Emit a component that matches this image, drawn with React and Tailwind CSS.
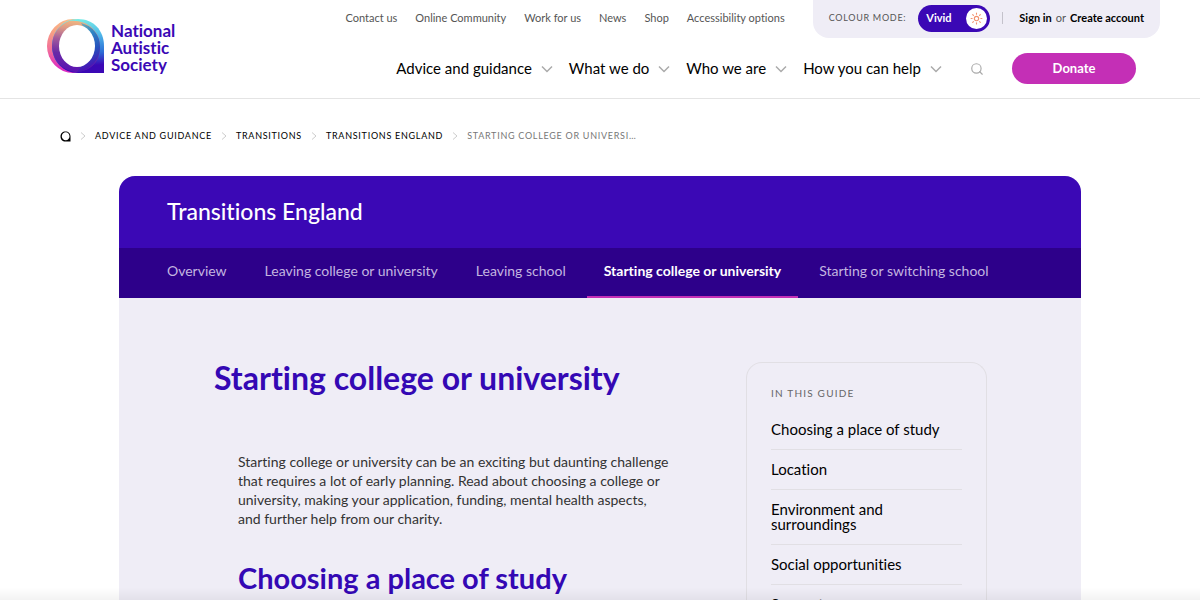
import React from "react";
import { Search, Sun } from "lucide-react";

const topLinks = ["Contact us", "Online Community", "Work for us", "News", "Shop", "Accessibility options"];

const mainNav = ["Advice and guidance", "What we do", "Who we are", "How you can help"];

const crumbs = ["Advice and guidance", "Transitions", "Transitions England"];

const tabs = [
  { label: "Overview" },
  { label: "Leaving college or university" },
  { label: "Leaving school" },
  { label: "Starting college or university", active: true },
  { label: "Starting or switching school" },
];

const guide = [
  "Choosing a place of study",
  "Location",
  "Environment and surroundings",
  "Social opportunities",
  "Support",
];

function Logo() {
  return (
    <a href="#" className="flex items-end gap-[7px] text-[#3b08b5]">
      <svg viewBox="0 0 57 54" className="h-[54px] w-[57px]" aria-hidden="true">
        <defs>
          <linearGradient id="outer" x1="0.6" y1="0" x2="0.3" y2="1">
            <stop offset="0" stopColor="#fbc08c" />
            <stop offset="0.35" stopColor="#f8a283" />
            <stop offset="0.7" stopColor="#f26a9b" />
            <stop offset="1" stopColor="#d81fc8" />
          </linearGradient>
          <linearGradient id="drop" x1="0.5" y1="0" x2="0.6" y2="1">
            <stop offset="0" stopColor="#78ece6" />
            <stop offset="0.3" stopColor="#52bdea" />
            <stop offset="0.65" stopColor="#2d6ed6" />
            <stop offset="0.88" stopColor="#3b08b5" />
          </linearGradient>
          <linearGradient id="overlap" x1="0.5" y1="0" x2="0.4" y2="1">
            <stop offset="0" stopColor="#f0b682" />
            <stop offset="0.16" stopColor="#dd9a86" />
            <stop offset="0.38" stopColor="#a35a9c" />
            <stop offset="0.65" stopColor="#6a2aa6" />
            <stop offset="1" stopColor="#5a12b4" />
          </linearGradient>
          <linearGradient id="overlapRight" x1="0" y1="0" x2="0.2" y2="1">
            <stop offset="0" stopColor="#7fb0b0" />
            <stop offset="0.3" stopColor="#2f86c4" />
            <stop offset="0.65" stopColor="#2650bd" />
            <stop offset="1" stopColor="#4a10b4" />
          </linearGradient>
        </defs>
        <ellipse cx="26" cy="27" rx="26" ry="27" fill="url(#outer)" />
        <path d="M31 0C46 0 57 11 57 27V54H31C16 54 5 42 5 27S16 0 31 0Z" fill="url(#drop)" />
        <path d="M22 2C40 0 53 12 53 28S42 53 28 53C14 51 5 40 5 27C5 15 12 6 22 2Z" fill="url(#overlap)" />
        <path d="M34 4C46 7 53 16 53 28C53 41 43 52 30 53L36 45L48 27Z" fill="url(#overlapRight)" />
        <ellipse cx="30" cy="27" rx="18" ry="21" fill="#fff" />
      </svg>
      <span className="text-[17px] leading-[17px] font-bold">
        National
        <br />
        Autistic
        <br />
        Society
      </span>
    </a>
  );
}

function DownArrow() {
  return (
    <svg viewBox="0 0 12 8" className="h-2 w-3 fill-none stroke-[#aaa]" strokeWidth="1.5" aria-hidden="true">
      <path d="M1 1.500L6 6.500L11 1.500" />
    </svg>
  );
}

function CrumbArrow() {
  return (
    <svg viewBox="0 0 8 8" className="size-2 fill-none stroke-[#ccc]" aria-hidden="true">
      <path d="M2 0.500L6 4L2 7.500" />
    </svg>
  );
}

function Header() {
  return (
    <header className="flex justify-between border-b border-[#e4e4e4] pr-10 pb-[14px] pl-[47px]">
      <div className="pt-[19px]">
        <Logo />
      </div>
      <div className="flex flex-col items-end">
        <div className="flex items-start gap-7">
          <nav className="flex h-9 items-center gap-[18px] text-[11px] text-[#555]">
            {topLinks.map((link) => (
              <a key={link} href="#">
                {link}
              </a>
            ))}
          </nav>
          <div className="flex h-[38px] items-center rounded-b-2xl bg-[#efedf6] px-4 pb-[2px] text-[11px]">
            <span className="text-[9px] tracking-[0.08em] text-[#555] uppercase">Colour mode:</span>
            <button className="mx-3 flex h-[27px] w-[72px] items-center justify-between rounded-full bg-[#3b08b5] pr-[3px] pl-2 font-bold text-white">
              Vivid
              <span className="flex size-[21px] items-center justify-center rounded-full bg-white">
                <Sun className="size-[13px] text-[#f2916f]" strokeWidth={2} />
              </span>
            </button>
            <span className="mr-4 h-3 w-px bg-[#c4c2cb]" />
            <a href="#" className="font-bold">
              Sign in
            </a>
            <span className="mx-1 text-[#555]">or</span>
            <a href="#" className="font-bold">
              Create account
            </a>
          </div>
        </div>
        <div className="mt-[15px] flex items-center pr-6">
          <nav className="flex items-center gap-4 text-[15px]">
            {mainNav.map((item) => (
              <a key={item} href="#" className="flex items-center gap-[9px]">
                {item}
                <DownArrow />
              </a>
            ))}
          </nav>
          <button aria-label="Search" className="mx-7">
            <Search className="size-[14px] text-[#aaa]" />
          </button>
          <button className="h-[31px] w-[124px] rounded-full bg-[#c42fb6] text-[13px] font-bold text-white">
            Donate
          </button>
        </div>
      </div>
    </header>
  );
}

function Breadcrumbs() {
  return (
    <nav
      aria-label="Breadcrumb"
      className="flex items-center gap-2 px-15 pt-[31px] text-[9px] leading-3 tracking-[0.08em] uppercase"
    >
      <a href="#" aria-label="Home">
        <svg viewBox="0 0 11 11" className="size-[11px]">
          <path
            fillRule="evenodd"
            d="M5.5 0.5C8.500 0.500 10.500 2.500 10.500 5.500V10.500H5.500C2.500 10.500 0.500 8.500 0.500 5.500S2.500 0.500 5.500 0.500ZM5.800 1.200C3.500 1.200 1.800 3 1.800 5.200S3.500 9.200 5.800 9.200 9.500 7.200 9.500 5.200 8 1.200 5.800 1.200Z"
          />
        </svg>
      </a>
      {crumbs.map((crumb) => (
        <React.Fragment key={crumb}>
          <CrumbArrow />
          <a href="#">{crumb}</a>
        </React.Fragment>
      ))}
      <CrumbArrow />
      <span className="text-[#777]">Starting college or universi…</span>
    </nav>
  );
}

export default function App() {
  return (
    <div className="h-screen overflow-y-auto bg-white font-['Lato',sans-serif] text-black [font-variant-ligatures:none] [scrollbar-width:none]">
      <Header />
      <Breadcrumbs />

      <main className="mx-auto mt-[34px] max-w-[962px] rounded-t-2xl bg-[#efedf6]">
        <div className="rounded-t-2xl bg-[#3b08b5] px-12 pt-[19px] pb-[21px] text-[23px] leading-8 font-medium text-white">
          Transitions England
        </div>
        <nav className="flex gap-1 bg-[#2d008a] px-[31px] text-[14px] leading-[21px] text-[#c3b5e0]">
          {tabs.map((tab) => (
            <a
              key={tab.label}
              href="#"
              className={
                tab.active
                  ? "border-b-2 border-[#c42fb6] px-[17px] pt-3 pb-[15px] font-bold text-white"
                  : "border-b-2 border-transparent px-[17px] pt-3 pb-[15px]"
              }
            >
              {tab.label}
            </a>
          ))}
        </nav>

        <div className="flex justify-between pt-16 pr-[94px] pl-[95px]">
          <article>
            <h1 className="text-[32px] leading-8 font-bold text-[#3408b4]">Starting college or university</h1>
            <div className="mt-[58px] max-w-[476px] pl-6">
              <p className="text-[14px] leading-[19px] text-[#333]">
                Starting college or university can be an exciting but daunting challenge that requires a lot of early
                planning. Read about choosing a college or university, making your application, funding, mental
                health aspects, and&nbsp;further&nbsp;help from our charity.
              </p>
              <h2 className="mt-8 pb-20 text-[29px] leading-9 font-bold text-[#3408b4]">Choosing a place of study</h2>
            </div>
          </article>
          <aside className="w-[241px] rounded-t-2xl border border-b-0 border-[#e1dfe4] px-6 pt-6">
            <h2 className="text-[10px] leading-3 tracking-[0.12em] text-[#666] uppercase">In this guide</h2>
            <ul className="mt-[11px] text-[15px] leading-[15px]">
              {guide.map((item) => (
                <li key={item} className="border-b border-[#e1dfe4] py-3">
                  <a href="#">{item}</a>
                </li>
              ))}
            </ul>
          </aside>
        </div>
      </main>

      <div className="pointer-events-none fixed inset-x-0 bottom-0 h-3 bg-linear-to-t from-black/5 to-transparent" />
    </div>
  );
}
